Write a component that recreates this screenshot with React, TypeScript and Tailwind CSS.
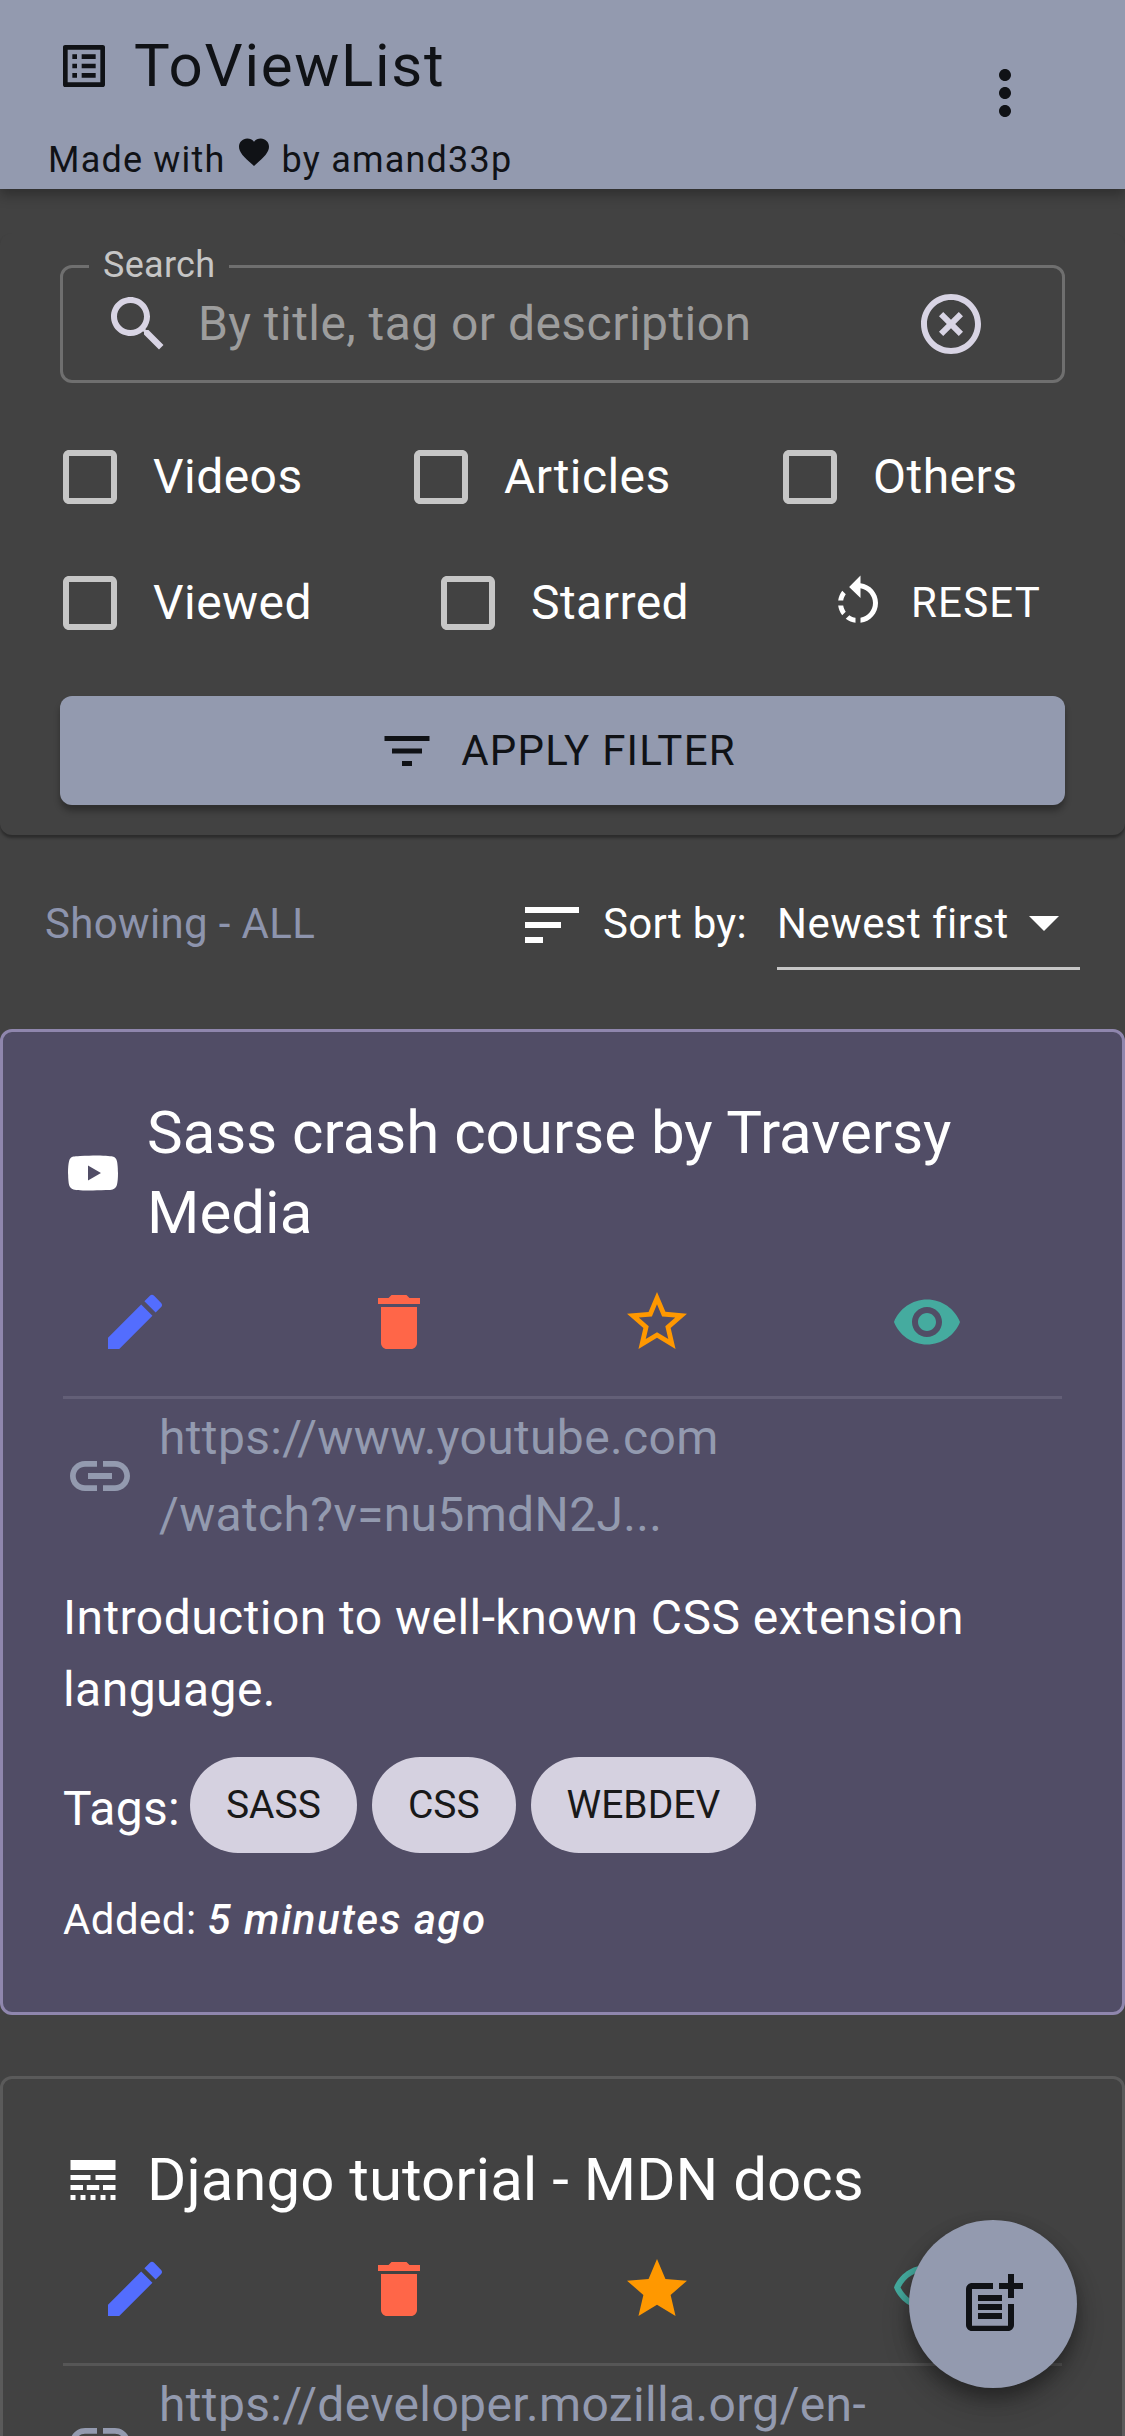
import React from 'react';

// material icon paths, all on a 24x24 box
const paths = {
  listAlt: 'M19 5v14H5V5h14m1.1-2H3.9c-.5 0-.9.4-.9.9v16.2c0 .4.4.9.9.9h16.2c.4 0 .9-.5.9-.9V3.9c0-.5-.5-.9-.9-.9zM11 7h6v2h-6V7zm0 4h6v2h-6v-2zm0 4h6v2h-6zM7 7h2v2H7zm0 4h2v2H7zm0 4h2v2H7z',
  more: 'M12 8c1.1 0 2-.9 2-2s-.9-2-2-2-2 .9-2 2 .9 2 2 2zm0 2c-1.1 0-2 .9-2 2s.9 2 2 2 2-.9 2-2-.9-2-2-2zm0 6c-1.1 0-2 .9-2 2s.9 2 2 2 2-.9 2-2-.9-2-2-2z',
  heart: 'M12 21.35l-1.45-1.32C5.4 15.36 2 12.28 2 8.5 2 5.42 4.42 3 7.5 3c1.74 0 3.41.81 4.5 2.09C13.09 3.81 14.76 3 16.5 3 19.58 3 22 5.42 22 8.5c0 3.78-3.4 6.86-8.55 11.54L12 21.35z',
  search: 'M15.5 14h-.79l-.28-.27C15.41 12.59 16 11.11 16 9.5 16 5.91 13.09 3 9.5 3S3 5.91 3 9.5 5.91 16 9.5 16c1.61 0 3.09-.59 4.23-1.57l.27.28v.79l5 4.99L20.49 19l-4.99-5zm-6 0C7.01 14 5 11.99 5 9.5S7.01 5 9.5 5 14 7.01 14 9.5 11.99 14 9.5 14z',
  clear: 'M14.59 8L12 10.59 9.41 8 8 9.41 10.59 12 8 14.59 9.41 16 12 13.41 14.59 16 16 14.59 13.41 12 16 9.41 14.59 8zM12 2C6.47 2 2 6.47 2 12s4.47 10 10 10 10-4.47 10-10S17.53 2 12 2zm0 18c-4.41 0-8-3.59-8-8s3.59-8 8-8 8 3.59 8 8-3.59 8-8 8z',
  box: 'M19 5v14H5V5h14m0-2H5c-1.1 0-2 .9-2 2v14c0 1.1.9 2 2 2h14c1.1 0 2-.9 2-2V5c0-1.1-.9-2-2-2z',
  reset: 'M7.11 8.53L5.7 7.11C4.8 8.27 4.24 9.61 4.07 11h2.02c.14-.87.49-1.72 1.02-2.47zM6.09 13H4.07c.17 1.39.72 2.73 1.62 3.89l1.41-1.42c-.52-.75-.87-1.59-1.01-2.47zm1.01 5.32c1.16.9 2.51 1.44 3.9 1.61V17.9c-.87-.15-1.71-.49-2.46-1.03L7.1 18.32zM13 4.07V1L8.45 5.55 13 10V6.09c2.84.48 5 2.94 5 5.91s-2.16 5.43-5 5.91v2.02c3.95-.49 7-3.85 7-7.93s-3.05-7.44-7-7.93z',
  filter: 'M10 18h4v-2h-4v2zM3 6v2h18V6H3zm3 7h12v-2H6v2z',
  sort: 'M3 18h6v-2H3v2zM3 6v2h18V6H3zm0 7h12v-2H3v2z',
  caret: 'M7 10l5 5 5-5z',
  edit: 'M3 17.25V21h3.75L17.81 9.94l-3.75-3.75L3 17.25zM20.71 7.04c.39-.39.39-1.02 0-1.41l-2.34-2.34a.9959.9959 0 00-1.41 0l-1.83 1.83 3.75 3.75 1.83-1.83z',
  trash: 'M6 19c0 1.1.9 2 2 2h8c1.1 0 2-.9 2-2V7H6v12zM19 4h-3.5l-1-1h-5l-1 1H5v2h14V4z',
  starBorder: 'M22 9.24l-7.19-.62L12 2 9.19 8.63 2 9.24l5.46 4.73L5.82 21 12 17.27 18.18 21l-1.63-7.03L22 9.24zM12 15.4l-3.76 2.27 1-4.28-3.32-2.88 4.38-.38L12 6.1l1.71 4.04 4.38.38-3.32 2.88 1 4.28L12 15.4z',
  star: 'M12 17.27L18.18 21l-1.64-7.03L22 9.24l-7.19-.61L12 2 9.19 8.63 2 9.24l5.46 4.73L5.82 21z',
  eye: 'M12 4.5C7 4.5 2.73 7.61 1 12c1.73 4.39 6 7.5 11 7.5s9.27-3.11 11-7.5c-1.73-4.39-6-7.5-11-7.5zM12 17c-2.76 0-5-2.24-5-5s2.24-5 5-5 5 2.24 5 5-2.24 5-5 5zm0-8c-1.66 0-3 1.34-3 3s1.34 3 3 3 3-1.34 3-3-1.34-3-3-3z',
  eyeOutline: 'M12 6c3.79 0 7.17 2.13 8.82 5.5C19.17 14.87 15.79 17 12 17s-7.17-2.13-8.82-5.5C4.83 8.13 8.21 6 12 6m0-2C7 4 2.73 7.11 1 11.5 2.73 15.89 7 19 12 19s9.27-3.11 11-7.5C21.27 7.11 17 4 12 4zm0 5c1.38 0 2.5 1.12 2.5 2.5S13.38 14 12 14s-2.5-1.12-2.5-2.5S10.62 9 12 9m0-2c-2.48 0-4.5 2.02-4.5 4.5S9.52 16 12 16s4.5-2.02 4.5-4.5S14.48 7 12 7z',
  youtube: 'M10 15l5.19-3L10 9v6m11.56-7.83c.13.47.22 1.1.28 1.9.07.8.1 1.49.1 2.09L22 12c0 2.19-.16 3.8-.44 4.83-.25.9-.83 1.48-1.73 1.73-.47.13-1.33.22-2.65.28-1.3.07-2.49.1-3.59.1L12 19c-4.19 0-6.8-.16-7.83-.44-.9-.25-1.48-.83-1.73-1.73-.13-.47-.22-1.1-.28-1.9-.07-.8-.1-1.49-.1-2.09L2 12c0-2.19.16-3.8.44-4.83.25-.9.83-1.48 1.73-1.73.47-.13 1.33-.22 2.65-.28 1.3-.07 2.49-.1 3.59-.1L12 5c4.19 0 6.8.16 7.83.44.9.25 1.48.83 1.73 1.73z',
  link: 'M3.9 12c0-1.71 1.39-3.1 3.1-3.1h4V7H7c-2.76 0-5 2.24-5 5s2.24 5 5 5h4v-1.9H7c-1.71 0-3.1-1.39-3.1-3.1zM8 13h8v-2H8v2zm9-6h-4v1.9h4c1.71 0 3.1 1.39 3.1 3.1s-1.39 3.1-3.1 3.1h-4V17h4c2.76 0 5-2.24 5-5s-2.24-5-5-5z',
  lineStyle: 'M3 16h5v-2H3v2zm6.5 0h5v-2h-5v2zm6.5 0h5v-2h-5v2zM3 20h2v-2H3v2zm4 0h2v-2H7v2zm4 0h2v-2h-2v2zm4 0h2v-2h-2v2zm4 0h2v-2h-2v2zM3 12h8v-2H3v2zm10 0h8v-2h-8v2zM3 4v4h18V4H3z',
  postAdd: 'M17 19.22H5V7h7V5H5c-1.1 0-2 .9-2 2v12c0 1.1.9 2 2 2h12c1.1 0 2-.9 2-2v-7h-2v7.22zM19 2h-2v3h-3c.01.01 0 2 0 2h3v2.99c.01.01 2 0 2 0V7h3V5h-3V2zM7 9h8v2H7zM7 12v2h8v-2H7zM7 15h8v2H7z',
};

const Icon: React.FC<{ d: string; className?: string }> = ({ d, className }) => (
  <svg viewBox="0 0 24 24" fill="currentColor" className={`shrink-0 ${className ?? ''}`}>
    <path d={d} />
  </svg>
);

const Check: React.FC<{ label: string }> = ({ label }) => (
  <div className="flex items-center -ml-[6px]">
    <Icon d={paths.box} className="w-[72px] h-[72px] text-[#c6c6c6]" />
    <span className="ml-[27px] text-[48px] leading-[72px] tracking-[0.45px] text-white">{label}</span>
  </div>
);

type CardProps = {
  active?: boolean;
  typeIcon: string;
  title: React.ReactNode;
  starIcon: string;
  eyeIcon: string;
  url: React.ReactNode;
  children?: React.ReactNode;
};

const Card: React.FC<CardProps> = ({ active, typeIcon, title, starIcon, eyeIcon, url, children }) => (
  <div
    className={`border-[3px] rounded-[12px] pt-[61px] pb-[61px] px-[60px] ${
      active ? 'bg-[#514d66] border-[#8f86ad]' : 'bg-[#424242] border-[#5a5a5a]'
    }`}
  >
    <div className="flex items-center">
      <Icon d={typeIcon} className="w-[60px] h-[60px] text-white" />
      <h2 className="ml-[24px] text-[60px] leading-[80px] font-normal text-white">{title}</h2>
    </div>

    <div className="flex mt-[33px] mb-[38px]">
      <Icon d={paths.edit} className="w-[72px] h-[72px] ml-[36px] text-[#536dfe]" />
      <Icon d={paths.trash} className="w-[72px] h-[72px] ml-[192px] text-[#ff6648]" />
      <Icon d={starIcon} className="w-[72px] h-[72px] ml-[186px] text-[#ff9800]" />
      <Icon d={eyeIcon} className="w-[72px] h-[72px] ml-[198px] text-[#45ab9f]" />
    </div>

    <div className={`h-[3px] ${active ? 'bg-[#635f77]' : 'bg-[#565656]'}`} />

    <div className="flex items-center">
      <Icon d={paths.link} className="w-[72px] h-[72px] ml-[1px] text-[#939aaf]" />
      <a className="ml-[23px] text-[48px] leading-[77px] tracking-[0.35px] text-[#939aaf]">{url}</a>
    </div>

    {children}
  </div>
);

const App: React.FC = () => {
  return (
    <div className="relative h-[2436px] overflow-hidden bg-[#424242] font-['Roboto',sans-serif]">
      {/* App bar */}
      <header className="relative z-10 h-[189px] bg-[#939aaf] text-[#101216] shadow-[0_6px_12px_rgba(0,0,0,0.3)] flex justify-between">
        <div>
          <div className="flex items-center pl-[56px] pt-[26px]">
            <Icon d={paths.listAlt} className="w-[56px] h-[56px]" />
            <span className="ml-[22px] text-[60px] leading-[80px] tracking-[1.7px]">ToViewList</span>
          </div>
          <p className="pl-[48px] mt-[27px] text-[36px] leading-[54px] tracking-[1.2px] whitespace-nowrap">
            Made with
            <Icon d={paths.heart} className="inline-block w-[36px] h-[36px] mx-[10px] align-[2px]" />
            by amand33p
          </p>
        </div>
        <div className="pt-[57px] pr-[84px]">
          <Icon d={paths.more} className="w-[72px] h-[72px]" />
        </div>
      </header>

      {/* Filters */}
      <section className="mt-[44px] rounded-[12px] bg-[#424242] px-[60px] pt-[32px] pb-[30px] shadow-[0_3px_3px_rgba(0,0,0,0.35)]">
        <div className="relative flex items-center h-[118px] border-[3px] border-[#6f6f6f] rounded-[12px]">
          <label className="absolute left-[26px] -top-[30px] bg-[#424242] px-[14px] text-[36px] leading-[54px] tracking-[0.3px] text-[#c6c6c6]">
            Search
          </label>
          <Icon d={paths.search} className="w-[72px] h-[72px] ml-[39px] text-[#d8d4e4]" />
          <input
            placeholder="By title, tag or description"
            className="flex-1 min-w-0 ml-[24px] bg-transparent outline-none text-[48px] tracking-[0.45px] text-white placeholder:text-[#9d9d9d] placeholder:opacity-100"
          />
          <Icon d={paths.clear} className="w-[72px] h-[72px] mr-[75px] text-[#d8d4e4]" />
        </div>

        <div className="grid grid-cols-[351px_369px_1fr] items-center h-[126px] mt-[31px]">
          <Check label="Videos" />
          <Check label="Articles" />
          <Check label="Others" />
        </div>
        <div className="grid grid-cols-[378px_390px_1fr] items-center h-[126px]">
          <Check label="Viewed" />
          <Check label="Starred" />
          <div className="flex items-center">
            <Icon d={paths.reset} className="w-[60px] h-[60px] text-white" />
            <span className="ml-[23px] pb-[2px] text-[42px] tracking-[1.2px] text-white">RESET</span>
          </div>
        </div>

        <button className="flex items-center justify-center w-full h-[109px] mt-[30px] pr-[12px] rounded-[12px] bg-[#939aaf] text-[#101216] shadow-[0_6px_6px_rgba(0,0,0,0.3)]">
          <Icon d={paths.filter} className="w-[60px] h-[60px]" />
          <span className="ml-[24px] text-[42px] tracking-[1.2px]">APPLY FILTER</span>
        </button>
      </section>

      {/* Sort row */}
      <div className="flex items-center justify-between h-[180px] pl-[45px] pr-[45px]">
        <span className="pb-[3px] text-[42px] leading-[63px] tracking-[0.35px] text-[#8d94ad]">Showing - ALL</span>
        <div className="flex items-center">
          <Icon d={paths.sort} className="w-[72px] h-[72px] text-white" />
          <span className="ml-[15px] pb-[3px] text-[42px] leading-[63px] tracking-[0.3px] text-white">Sort by:</span>
          <div className="relative flex items-center w-[303px] h-[90px] ml-[30px] border-b-[3px] border-[#c6c6c6]">
            <span className="text-[42px] leading-[63px] tracking-[0.45px] text-white">Newest first</span>
            <Icon d={paths.caret} className="absolute right-[0px] top-[6px] w-[72px] h-[72px] text-white" />
          </div>
        </div>
      </div>

      {/* Entries */}
      <div className="mt-[14px] flex flex-col gap-[61px]">
        <Card
          active
          typeIcon={paths.youtube}
          title={<>Sass crash course by Traversy Media</>}
          starIcon={paths.starBorder}
          eyeIcon={paths.eye}
          url={<>https://www.youtube.com<br />/watch?v=nu5mdN2J...</>}
        >
          <p className="mt-[29px] text-[48px] leading-[72px] tracking-[0.45px] text-white">
            Introduction to well-known CSS extension language.
          </p>
          <div className="flex items-center mt-[31px]">
            <span className="pt-[8px] text-[48px] leading-[72px] tracking-[0.3px] text-white">Tags:</span>
            <div className="flex gap-[15px] ml-[10px]">
              {['SASS', 'CSS', 'WEBDEV'].map((tag) => (
                <span key={tag} className="flex items-center h-[96px] px-[36px] rounded-[48px] bg-[#d5d1e0] text-[39px] text-[#191919]">
                  {tag}
                </span>
              ))}
            </div>
          </div>
          <p className="mt-[35px] text-[42px] leading-[63px] tracking-[0.45px] text-white">
            Added: <em className="font-medium tracking-[1.5px]">5 minutes ago</em>
          </p>
        </Card>

        <Card
          typeIcon={paths.lineStyle}
          title="Django tutorial - MDN docs"
          starIcon={paths.star}
          eyeIcon={paths.eyeOutline}
          url={<>https://developer.mozilla.org/en-<br />US/docs/Learn/Server-side/Django</>}
        />
      </div>

      {/* Add button */}
      <button className="absolute right-[48px] bottom-[48px] z-20 flex items-center justify-center w-[168px] h-[168px] rounded-full bg-[#939aaf] text-[#101216] shadow-[0_9px_18px_rgba(0,0,0,0.35),0_18px_30px_rgba(0,0,0,0.15)]">
        <Icon d={paths.postAdd} className="w-[72px] h-[72px]" />
      </button>
    </div>
  );
};

export default App;
